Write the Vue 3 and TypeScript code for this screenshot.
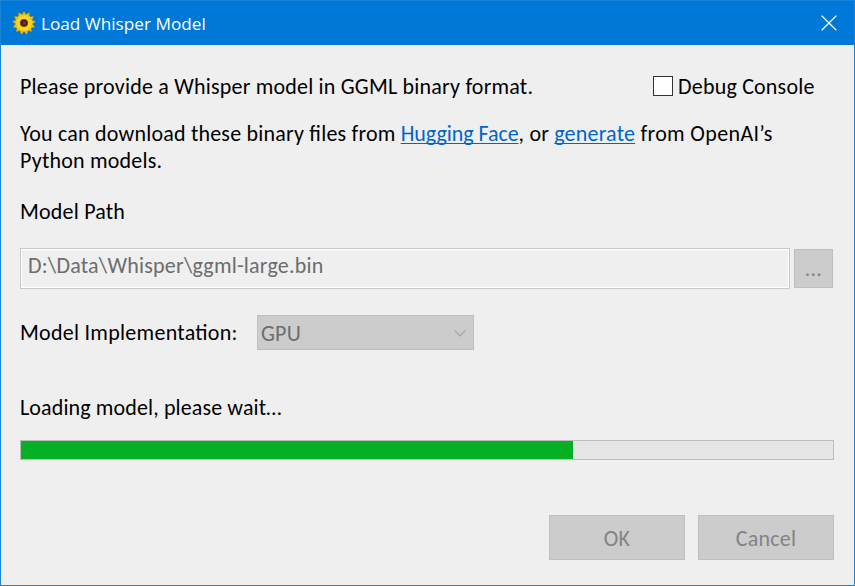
<script setup lang="ts">
import { ref } from 'vue'

const title = 'Load Whisper Model'
const modelPath = ref('D:\\Data\\Whisper\\ggml-large.bin')
const implementation = ref('GPU')
const debugConsole = ref(false)
const progress = ref(68)

const outerPetals = Array.from({ length: 13 }, (_, i) => (i * 360) / 13)
const innerPetals = outerPetals.map((a) => a + 14)
</script>

<template>
  <main class="window">
    <header class="titlebar">
      <svg class="flower" width="24" height="24" viewBox="-12 -12 24 24" aria-hidden="true">
        <path
          v-for="a in outerPetals"
          :key="`o${a}`"
          d="M-1 0 L-1.9 -7.5 Q-1.5 -10 0 -12 Q1.5 -10 1.9 -7.5 L1 0 Z"
          fill="#f0c010"
          stroke="#7d6a18"
          stroke-width="0.3"
          :transform="`rotate(${a})`"
        />
        <path
          v-for="a in innerPetals"
          :key="`i${a}`"
          d="M-1 0 L-1.4 -6.5 L0 -9.6 L1.4 -6.5 L1 0 Z"
          fill="#fcd820"
          :transform="`rotate(${a})`"
        />
        <circle r="4.1" fill="#7a4a10" />
        <circle r="3.3" fill="#4a1f14" />
        <circle cx="0.3" cy="0.3" r="1.3" fill="#75433a" />
      </svg>
      <h1>{{ title }}</h1>
      <button class="close" aria-label="Close">
        <svg width="16" height="16" viewBox="0 0 16 16">
          <path d="M0.7 0.7 L15.3 15.3 M15.3 0.7 L0.7 15.3" stroke="#fff" stroke-width="1.25" fill="none" />
        </svg>
      </button>
    </header>

    <section class="body">
      <div class="intro">
        <p>Please provide a Whisper model in GGML binary format.</p>
        <label class="debug">
          <input v-model="debugConsole" type="checkbox" />
          <span>Debug Console</span>
        </label>
      </div>

      <p class="download">
        You can download these binary files from <a class="hub" href="#">Hugging Face</a>, or
        <a href="#">generate</a><span class="source"> from OpenAI’s</span><br />Python models.
      </p>

      <p class="path-label">Model Path</p>
      <div class="path-row">
        <div class="path-field">{{ modelPath }}</div>
        <button class="browse" disabled>...</button>
      </div>

      <div class="impl-row">
        <span class="impl-label">Model Implementation:</span>
        <div class="combo">
          <span>{{ implementation }}</span>
          <svg width="12" height="7" viewBox="0 0 12 7" aria-hidden="true">
            <path d="M0.7 0.7 L6 6 L11.3 0.7" stroke="#a0a0a0" stroke-width="1.1" fill="none" />
          </svg>
        </div>
      </div>

      <p class="status">Loading model, please wait…</p>
      <div class="progress">
        <div class="bar" :style="{ width: progress + '%' }"></div>
      </div>

      <footer class="actions">
        <button disabled>OK</button>
        <button disabled>Cancel</button>
      </footer>
    </section>
  </main>
</template>

<style>
body {
  margin: 0;
}
</style>

<style scoped>
* {
  box-sizing: border-box;
}
.window {
  width: 855px;
  height: 586px;
  border: 1px solid #1883d7;
  background: #efefef;
  color: #000;
  font: 22px/27px Carlito, Calibri, Lato, sans-serif;
  letter-spacing: 0.2px;
  font-feature-settings: "liga" 1;
}
p,
h1 {
  margin: 0;
}
button {
  font: inherit;
  letter-spacing: inherit;
  padding: 0;
}
.titlebar {
  height: 44px;
  background: #0078d7;
  display: flex;
  align-items: center;
  padding: 0 17px 1px 11px;
}
.flower {
  margin-right: 5px;
}
h1 {
  flex: 1;
  padding-top: 2px;
  color: #fff;
  font: 400 17.2px/24px "Open Sans", sans-serif;
  letter-spacing: 0;
}
.close {
  display: flex;
  border: 0;
  background: none;
}
.body {
  padding: 28px 20px 0 19px;
}
.intro {
  display: flex;
  justify-content: space-between;
  white-space: nowrap;
}
.debug {
  display: flex;
  align-items: center;
  gap: 5px;
  width: 181px;
}
.debug input {
  appearance: none;
  width: 20px;
  height: 20px;
  margin: 0 0 1px;
  border: 1px solid #333;
  background: #fff;
}
.download {
  margin-top: 20px;
  white-space: nowrap;
}
a {
  color: #0066cc;
  text-decoration: underline;
  text-decoration-thickness: 1px;
  text-underline-offset: 2px;
  text-decoration-skip-ink: none;
}
.hub {
  letter-spacing: -0.05px;
}
.source {
  letter-spacing: 0.35px;
}
.path-label {
  margin-top: 24px;
}
.path-row {
  display: flex;
  align-items: center;
  gap: 4px;
  margin-top: 23px;
}
.path-field {
  width: 770px;
  height: 41px;
  padding: 3px 7px;
  border: 1px solid #c8c8c8;
  box-shadow: inset 0 0 0 1px #fff;
  color: #6d6d6d;
}
.browse,
.combo,
.actions button {
  border: 1px solid #bfbfbf;
  background: #ccc;
  color: #838383;
}
.browse {
  width: 39px;
  height: 39px;
}
.impl-row {
  display: flex;
  align-items: center;
  margin-top: 26px;
}
.impl-label {
  width: 237px;
  letter-spacing: 0.27px;
}
.combo {
  display: flex;
  align-items: center;
  justify-content: space-between;
  width: 217px;
  height: 35px;
  padding: 1px 7px 0 3px;
  color: #6d6d6d;
}
.status {
  margin-top: 44px;
  letter-spacing: 0.12px;
}
.progress {
  width: 814px;
  height: 20px;
  margin-top: 19px;
  border: 1px solid #bcbcbc;
  background: #e6e6e6;
}
.bar {
  height: 100%;
  background: #06b025;
}
.actions {
  display: flex;
  justify-content: flex-end;
  gap: 13px;
  margin-top: 55px;
}
.actions button {
  width: 136px;
  height: 45px;
  padding-top: 2px;
}
</style>
